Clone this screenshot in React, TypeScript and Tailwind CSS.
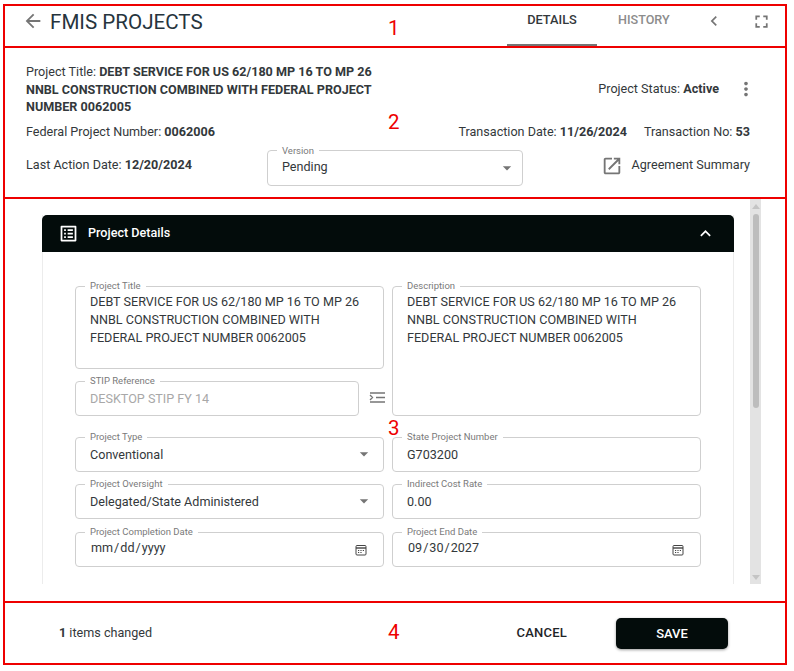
import React from 'react';

const Icon: React.FC<{ d: string; className?: string }> = ({ d, className }) => (
  <svg viewBox="0 0 24 24" fill="currentColor" className={className}>
    <path d={d} />
  </svg>
);

const ARROW_DROP = 'M7 10l5 5 5-5z';

const CalendarIcon = () => (
  <svg viewBox="0 0 12 12" fill="none" stroke="#444" strokeWidth="1" className="absolute right-[16px] top-[7px] h-3 w-3">
    <rect x="1" y="1.5" width="10" height="9.5" rx="1" />
    <path d="M1 4h10" strokeWidth="1.4" />
    <path d="M3 6.5h1.2M5.4 6.5h1.2M7.8 6.5H9M3 8.5h1.2M5.4 8.5h1.2" />
  </svg>
);

// native date inputs leave a little air round the slashes
const DateText: React.FC<{ parts: string[] }> = ({ parts }) => (
  <span className="ml-[1px]">
    {parts[0]}
    <span className="mx-[1px]">/</span>
    {parts[1]}
    <span className="mx-[1px]">/</span>
    {parts[2]}
  </span>
);

// outlined text field with the label sitting in a notch of the border
const Field: React.FC<{
  label: string;
  className?: string;
  textClass?: string;
  children?: React.ReactNode;
  right?: React.ReactNode;
}> = ({ label, className = '', textClass = 'mt-[4px]', children, right }) => (
  <fieldset className={`relative min-w-0 rounded border border-[#cfcfcf] px-[14px] ${className}`}>
    <legend className="ml-[-5px] px-[5px] text-[9.5px] leading-[10px] text-[#7a7a7a]">{label}</legend>
    <div className={`text-[12.6px] leading-[18px] text-[#33383b] ${textClass}`}>{children}</div>
    {right}
  </fieldset>
);

const SelectArrow = () => <Icon d={ARROW_DROP} className="absolute right-[9px] top-[2px] h-5 w-5 text-[#757575]" />;

const Mark: React.FC<{ n: number; className: string }> = ({ n, className }) => (
  <span className={`absolute left-[388px] text-[20.5px] leading-[24px] text-[#ee0000] ${className}`}>{n}</span>
);

const App: React.FC = () => {
  const titleText = (
    <>
      DEBT SERVICE FOR US 62/180 MP 16 TO MP 26
      <br />
      NNBL CONSTRUCTION COMBINED WITH
      <br />
      FEDERAL PROJECT NUMBER 0062005
    </>
  );

  return (
    <div className="h-[671px] w-[794px] overflow-hidden bg-white pl-[3px] pt-[4px] font-['Roboto',sans-serif] text-[12.6px] text-[#33383b]">
      <div className="w-[784px] border-2 border-[#ee0000]">
        {/* 1: header */}
        <header className="relative box-content flex h-[40px] items-start border-b-2 border-[#ee0000]">
          <Icon
            d="M20 11H7.83l5.59-5.59L12 4l-8 8 8 8 1.41-1.41L7.83 13H20v-2z"
            className="ml-[17px] mt-[4px] h-[22px] w-[22px] text-[#757575]"
          />
          <h1 className="ml-[6px] mt-[2px] text-[20.6px] leading-[28px] text-[#26343d]">FMIS PROJECTS</h1>
          <nav className="ml-auto flex h-full">
            <div className="flex h-[40px] w-[90px] justify-center border-b-2 border-[#757575] pt-[5px] text-[12.8px] font-medium leading-[18px] text-[#33383b]">
              DETAILS
            </div>
            <div className="ml-[21px] w-[52px] pt-[5px] text-[12.6px] font-medium leading-[18px] text-[#8c8c8c]">HISTORY</div>
          </nav>
          <Icon d="M15.41 7.41 14 6l-6 6 6 6 1.41-1.41L10.83 12z" className="ml-[34px] mt-[5px] h-[20px] w-[20px] text-[#757575]" />
          <Icon
            d="M7 14H5v5h5v-2H7v-3zm-2-4h2V7h3V5H5v5zm12 7h-3v2h5v-5h-2v3zM14 5v2h3v3h2V5h-5z"
            className="ml-[27px] mr-[13px] mt-[5px] h-[21px] w-[21px] text-[#757575]"
          />
        </header>

        {/* 2: summary */}
        <section className="box-content h-[148px] border-b-2 border-[#ee0000] pl-[21px] pr-[34px] pt-[1px]">
          <div className="flex items-start justify-between pt-[14px]">
            <p className="w-[352px] leading-[17.6px]">
              Project Title: <b className="font-bold">DEBT SERVICE FOR US 62/180 MP 16 TO MP 26 NNBL CONSTRUCTION COMBINED WITH FEDERAL PROJECT NUMBER 0062005</b>
            </p>
            <div className="mr-[-6px] mt-[15px] flex items-center">
              <span>
                Project Status: <b className="font-bold">Active</b>
              </span>
              <Icon
                d="M12 8c1.1 0 2-.9 2-2s-.9-2-2-2-2 .9-2 2 .9 2 2 2zm0 2c-1.1 0-2 .9-2 2s.9 2 2 2 2-.9 2-2-.9-2-2-2zm0 6c-1.1 0-2 .9-2 2s.9 2 2 2 2-.9 2-2-.9-2-2-2z"
                className="ml-[16px] h-[22px] w-[22px] text-[#757575]"
              />
            </div>
          </div>
          <div className="mt-[7px] flex justify-between leading-[18px]">
            <span>
              Federal Project Number: <b className="font-bold">0062006</b>
            </span>
            <div className="mr-[1px] flex gap-[17px]">
              <span>
                Transaction Date: <b className="font-bold">11/26/2024</b>
              </span>
              <span>
                Transaction No: <b className="font-bold">53</b>
              </span>
            </div>
          </div>
          <div className="mt-[5px] flex items-start">
            <span className="w-[241px] pt-[10px] leading-[18px]">
              Last Action Date: <b className="font-bold">12/20/2024</b>
            </span>
            <Field
              label="Version"
              className="h-[40px] w-[256px]"
              textClass="mt-[2px]"
              right={<Icon d={ARROW_DROP} className="absolute right-[5px] top-[2px] h-5 w-5 text-[#757575]" />}
            >
              Pending
            </Field>
            <div className="ml-auto mr-[1px] flex items-center pt-[9px]">
              <Icon
                d="M19 19H5V5h7V3H5c-1.11 0-2 .9-2 2v14c0 1.1.89 2 2 2h14c1.1 0 2-.9 2-2v-7h-2v7zM14 3v2h3.59l-9.83 9.83 1.41 1.41L19 6.41V10h2V3h-7z"
                className="mr-[9px] h-[22px] w-[22px] text-[#757575]"
              />
              Agreement Summary
            </div>
          </div>
        </section>

        {/* 3: form */}
        <section className="flex h-[404px] border-b-2 border-[#ee0000]">
          <div className="h-[385px] w-[746px] overflow-hidden pl-[37px] pt-[16px]">
            <div className="h-[370px] w-[692px] border-x border-[#ececec]">
              <div className="mx-[-1px] flex h-[37px] items-center rounded-t-[5px] bg-[#030c0b] pl-[16px] pr-[18px] text-white">
                <Icon
                  d="M19 5v14H5V5h14m1.1-2H3.9c-.5 0-.9.4-.9.9v16.2c0 .4.4.9.9.9h16.2c.4 0 .9-.5.9-.9V3.9c0-.5-.5-.9-.9-.9zM11 7h6v2h-6V7zm0 4h6v2h-6v-2zm0 4h6v2h-6zM7 7h2v2H7zm0 4h2v2H7zm0 4h2v2H7z"
                  className="h-[21px] w-[21px]"
                />
                <span className="ml-[9px] font-medium">Project Details</span>
                <Icon d="M12 8l-6 6 1.41 1.41L12 10.83l4.59 4.58L18 14z" className="ml-auto h-[21px] w-[21px]" />
              </div>
              <div className="px-[32px] pt-[29px]">
                <div className="grid grid-cols-2 gap-x-[8px]">
                  <div>
                    <Field label="Project Title" className="h-[88px]" textClass="mt-[2px]">
                      {titleText}
                    </Field>
                    <div className="mt-[7px] flex items-center">
                      <Field label="STIP Reference" className="h-[40px] w-[284px] shrink-0">
                        <span className="text-[#a8a8a8]">DESKTOP STIP FY 14</span>
                      </Field>
                      <svg viewBox="0 0 16 11" fill="none" stroke="#757575" strokeWidth="1.3" className="ml-[10px] mt-[3px] h-[11px] w-[16px] shrink-0">
                        <path d="M1 1h15M7 5.5h9M1 10h15M1 3l2.5 2.5L1 8" />
                      </svg>
                    </div>
                  </div>
                  <Field label="Description" className="h-[135px]" textClass="mt-[2px]">
                    {titleText}
                  </Field>
                </div>
                <div className="mt-[16px] grid grid-cols-2 gap-x-[8px] gap-y-[7px]">
                  <Field label="Project Type" className="h-[40px]" right={<SelectArrow />}>
                    Conventional
                  </Field>
                  <Field label="State Project Number" className="h-[40px]">
                    G703200
                  </Field>
                  <Field label="Project Oversight" className="h-[40px]" right={<SelectArrow />}>
                    Delegated/State Administered
                  </Field>
                  <Field label="Indirect Cost Rate" className="h-[40px]">
                    0.00
                  </Field>
                  <Field label="Project Completion Date" className="mt-[1px] h-[40px]" textClass="mt-[2px]" right={<CalendarIcon />}>
                    <DateText parts={['mm', 'dd', 'yyyy']} />
                  </Field>
                  <Field label="Project End Date" className="mt-[1px] h-[40px]" textClass="mt-[2px]" right={<CalendarIcon />}>
                    <DateText parts={['09', '30', '2027']} />
                  </Field>
                </div>
              </div>
            </div>
          </div>
          {/* scrollbar */}
          <div className="ml-[-1px] flex h-[385px] w-[11px] flex-col items-center bg-[#e3e3e3]">
            <div className="mt-[5px] h-0 w-0 border-x-[4px] border-b-[5px] border-x-transparent border-b-[#c4c4c4]" />
            <div className="mt-[5px] h-[194px] w-[6px] rounded-full bg-[#bdbdbd]" />
            <div className="mb-[4px] mt-auto h-0 w-0 border-x-[4px] border-t-[5px] border-x-transparent border-t-[#c4c4c4]" />
          </div>
        </section>

        {/* 4: footer */}
        <footer className="flex h-[60px] items-center pl-[54px] pr-[57px]">
          <span>
            <b className="font-bold">1</b> items changed
          </span>
          <button className="ml-auto text-[13px] font-medium tracking-[0.2px] text-[#1f2528]">CANCEL</button>
          <button className="ml-[49px] mt-[1px] h-[31px] w-[112px] rounded-[5px] bg-[#030c0b] text-[13px] font-medium text-white shadow-[0_1px_3px_rgba(0,0,0,0.4)]">
            SAVE
          </button>
        </footer>
      </div>

      <Mark n={1} className="top-[16px]" />
      <Mark n={2} className="top-[110px]" />
      <Mark n={3} className="top-[416px]" />
      <Mark n={4} className="top-[620px]" />
    </div>
  );
};

export default App;
